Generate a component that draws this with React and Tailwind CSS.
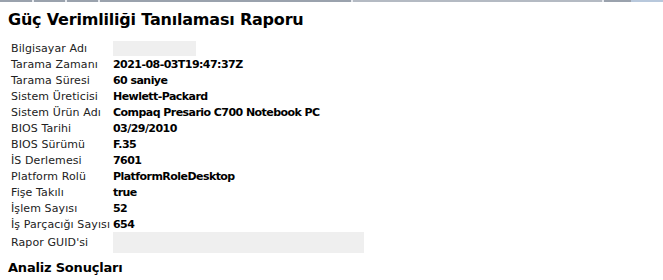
import React from "react";

const rows = [
  { label: "Bilgisayar Adı", box: "w-[83px] h-[15px]" },
  { label: "Tarama Zamanı", value: "2021-08-03T19:47:37Z" },
  { label: "Tarama Süresi", value: "60 saniye" },
  { label: "Sistem Üreticisi", value: "Hewlett-Packard" },
  { label: "Sistem Ürün Adı", value: "Compaq Presario C700 Notebook PC" },
  { label: "BIOS Tarihi", value: "03/29/2010" },
  { label: "BIOS Sürümü", value: "F.35" },
  { label: "İS Derlemesi", value: "7601" },
  { label: "Platform Rolü", value: "PlatformRoleDesktop" },
  { label: "Fişe Takılı", value: "true" },
  { label: "İşlem Sayısı", value: "52" },
  { label: "İş Parçacığı Sayısı", value: "654" },
  { label: "Rapor GUID'si", box: "w-[251px] h-[21px]", tall: true },
];

function TopStrip() {
  return (
    <div className="flex h-[2px] w-full bg-[#d8dde3]">
      <div className="w-[32px] bg-[#9aa2ad]" />
      <div className="w-[2px] bg-[#e6e9ee]" />
      <div className="w-[31px] bg-[#9aa2ad]" />
      <div className="w-[2px] bg-[#e6e9ee]" />
      <div className="w-[31px] bg-[#9aa2ad]" />
      <div className="w-[2px] bg-[#e6e9ee]" />
      <div className="w-[251px] bg-[#9aa2ad]" />
      <div className="w-[2px] bg-[#e6e9ee]" />
      <div className="w-[249px] bg-[#b4bac3]" />
      <div className="w-[2px] bg-[#e6e9ee]" />
      <div className="w-[27px] bg-[#9aa2ad]" />
      <div className="flex-1 bg-[#b8c8dc]" />
    </div>
  );
}

export default function App() {
  return (
    <div
      className="w-[663px] h-[280px] overflow-hidden bg-white text-black"
      style={{ fontFamily: '"DejaVu Sans", Verdana, sans-serif' }}
    >
      <TopStrip />
      <div className="px-[8px]">
        <h1 className="mt-[8px] text-[16px] leading-[20px] font-bold tracking-[-0.2px]">
          Güç Verimliliği Tanılaması Raporu
        </h1>
        <div className="mt-[10px] pl-[3px] text-[11px]">
          {rows.map((r) => (
            <div
              key={r.label}
              className={`flex items-center ${r.tall ? "h-[21px]" : "h-[16px]"}`}
            >
              <div className="w-[102px] shrink-0 pt-[2px] text-[#222] whitespace-nowrap tracking-[0.1px]">
                {r.label}
              </div>
              {r.box ? (
                <div className={`${r.box} bg-[#efefef]`} />
              ) : (
                <div className="pt-[2px] font-bold whitespace-nowrap tracking-[-0.55px]">
                  {r.value}
                </div>
              )}
            </div>
          ))}
        </div>
        <h2 className="mt-[7px] text-[13px] leading-[16px] font-bold tracking-[-0.2px]">
          Analiz Sonuçları
        </h2>
      </div>
    </div>
  );
}
